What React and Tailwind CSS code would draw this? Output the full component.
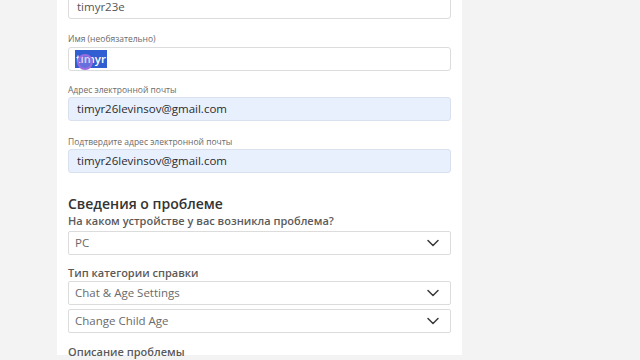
import React from "react";

const font = { fontFamily: '"Open Sans", "Noto Sans", sans-serif' };

const Chevron = () => (
  <svg width="12" height="8" viewBox="0 0 12 8" fill="none" className="shrink-0">
    <path d="M1 1.5 L6 6.5 L11 1.5" stroke="#3a3a3a" strokeWidth="1.5" strokeLinecap="round" strokeLinejoin="round" />
  </svg>
);

const Label = ({ children, className = "" }) => (
  <div className={`h-[11px] text-[8.5px] leading-[11px] text-[#6b6b6b] ${className}`}>{children}</div>
);

const Field = ({ children, filled = false, className = "" }) => (
  <div
    className={`relative flex h-[24px] items-center rounded-[3px] border px-[8px] text-[11.5px] ${
      filled ? "border-[#d9e1ef] bg-[#e8f0fe] text-[#2b2b2b]" : "border-[#dcdcdc] bg-white text-[#555]"
    } ${className}`}
  >
    {children}
  </div>
);

const Select = ({ value, className = "" }) => (
  <div className={`flex h-[24px] items-center justify-between rounded-[2px] border border-[#dcdcdc] bg-white pl-[6px] pr-[11px] text-[11.5px] text-[#6a6a6a] ${className}`}>
    <span>{value}</span>
    <Chevron />
  </div>
);

export default function App() {
  return (
    <div className="h-[360px] w-[640px] overflow-hidden bg-[#f3f3f3]" style={font}>
      <div className="ml-[57px] h-full w-[405px] bg-white px-[11px]">
        <div className="-mt-[5px]">
          <Field>timyr23e</Field>

          <Label className="mt-[14px]">Имя (необязательно)</Label>
          <Field className="mt-[3px]">
            <span className="relative -ml-[2px] bg-[#2f5fd0] px-[1px] font-semibold text-white">
              timyr
              <span className="absolute left-[2px] top-[4px] h-[16px] w-[16px] rounded-full border-[2px] border-[#9b6be0] bg-[#b48cf0]/40" />
            </span>
          </Field>

          <Label className="mt-[13px]">Адрес электронной почты</Label>
          <Field filled className="mt-[2px]">timyr26levinsov@gmail.com</Field>

          <Label className="mt-[15px]">Подтвердите адрес электронной почты</Label>
          <Field filled className="mt-[2px]">timyr26levinsov@gmail.com</Field>

          <div className="mt-[23px] text-[14px] font-semibold leading-[16px] text-[#333]">Сведения о проблеме</div>
          <div className="mt-[2px] text-[11px] font-semibold leading-[14px] text-[#5a5a5a]">
            На каком устройстве у вас возникла проблема?
          </div>
          <Select value="PC" className="mt-[3px]" />

          <div className="mt-[11px] text-[11px] font-semibold leading-[14px] text-[#5a5a5a]">Тип категории справки</div>
          <Select value="Chat & Age Settings" className="mt-[1px]" />
          <Select value="Change Child Age" className="mt-[4px]" />

          <div className="mt-[12px] text-[11px] font-semibold leading-[14px] text-[#5a5a5a]">Описание проблемы</div>
        </div>
      </div>
    </div>
  );
}
